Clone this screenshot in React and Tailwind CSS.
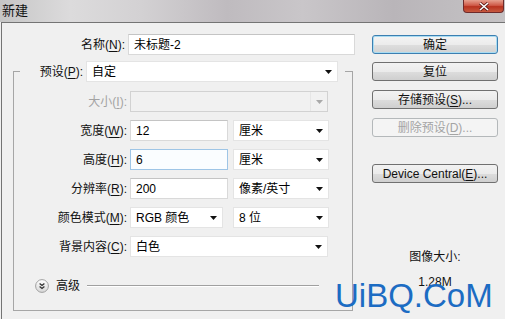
const Arrow = ({ disabled }) => (
  <svg width="7" height="4" viewBox="0 0 7 4" className="shrink-0">
    <path d="M0 0H7L3.5 4Z" fill={disabled ? '#a9a9a9' : '#111'} />
  </svg>
);

function Label({ children, width = 'w-[113px]', disabled }) {
  return (
    <div className={`${width} shrink-0 text-right ${disabled ? 'text-[#a3a3a3]' : 'text-[#111]'}`}>
      {children}
    </div>
  );
}

function Input({ value, width, focused }) {
  return (
    <div
      className={`${width} h-[21px] flex items-center pl-[5px] border ${
        focused ? 'border-[#9ec5e6] bg-[#fafdff]' : 'border-[#d9d9d9] border-t-[#c4c4c4] bg-white'
      }`}
    >
      {value}
    </div>
  );
}

function Select({ value, width }) {
  return (
    <div className={`${width} h-[21px] flex items-center justify-between pl-[5px] pr-[5px] bg-white border border-[#e4e4e4]`}>
      <span>{value}</span>
      <Arrow />
    </div>
  );
}

function Row({ label, disabled, children }) {
  return (
    <div className="flex items-center h-[21px]">
      <Label disabled={disabled}>{label}</Label>
      <div className="ml-[3px] flex items-center">{children}</div>
    </div>
  );
}

function Btn({ children, primary, disabled, className = '' }) {
  const base = 'w-[126px] h-[19px] flex items-center justify-center rounded-[3px] border';
  const look = disabled
    ? 'border-[#b4b8ba] bg-[#f4f4f4] text-[#a4a4a4]'
    : primary
    ? 'border-[#3c7fb1] shadow-[inset_0_0_0_1px_#a9dcf2] bg-[linear-gradient(to_bottom,#f4f4f4_0%,#ececec_50%,#dedede_51%,#d2d2d2_100%)] text-[#111]'
    : 'border-[#707070] bg-[linear-gradient(to_bottom,#f2f2f2_0%,#ebebeb_50%,#dddddd_51%,#cfcfcf_100%)] text-[#111]';
  return <div className={`${base} ${look} ${className}`}>{children}</div>;
}

const U = ({ children }) => <span className="underline underline-offset-2">{children}</span>;

export default function App() {
  return (
    <div className="relative w-[505px] h-[319px] overflow-hidden bg-[#f0f0f0] text-[12px] leading-[16px] font-['Liberation_Sans','Noto_Sans_CJK_SC',sans-serif]">
      {/* title bar */}
      <div className="h-[22px] flex bg-[linear-gradient(to_right,#c6c6c6_0%,#dcdbdc_14%,#d3d1d3_28%,#bfbbbf_45%,#c9c6c9_60%,#b9b5b9_78%,#c5c3c5_100%)]">
        <div className="pl-[2px] pt-[3px] text-[13px] text-[#111]">新建</div>
        <div className="ml-auto mr-[1px] w-[41px] h-[13px] rounded-b-[4px] border border-t-0 border-[#6e2a2a] bg-[linear-gradient(to_bottom,#e6a08f_0%,#cf5a48_45%,#b8321f_55%,#c75a40_100%)] flex items-center justify-center">
          <svg width="12" height="9" viewBox="0 0 12 9">
            <path d="M2 1L10 8M10 1L2 8" stroke="#5a1a14" strokeWidth="3" />
            <path d="M2 1L10 8M10 1L2 8" stroke="#fff" strokeWidth="1.6" />
          </svg>
        </div>
      </div>

      {/* body */}
      <div className="ml-[1px] h-[297px] border-l border-t border-[#747474] flex">
        {/* left column */}
        <div className="w-[359px] flex flex-col">
          <div className="mt-[11px] flex items-center h-[21px]">
            <Label width="w-[123px]">
              名称(<U>N</U>):
            </Label>
            <div className="ml-[3px]">
              <Input value="未标题-2" width="w-[227px]" />
            </div>
          </div>

          <fieldset className="mt-[6px] ml-[11px] w-[340px] border border-[#a6a6a6]">
            <legend className="ml-[6px]">
              <div className="flex items-center h-[21px] w-[325px]">
                <div className="w-[63px] text-right text-[#111]">
                  预设(<U>P</U>):
                </div>
                <div className="ml-[3px]">
                  <Select value="自定" width="w-[252px]" />
                </div>
              </div>
            </legend>

            <div className="pt-[9px] flex flex-col gap-[8px]">
              <Row label={<>大小(<U>I</U>):</>} disabled>
                <div className="w-[198px] h-[21px] flex bg-[#f1f1f1] border border-[#d2d2d2]">
                  <div className="flex-1" />
                  <div className="w-[17px] flex items-center justify-center border-l border-[#e6e6e6]">
                    <Arrow disabled />
                  </div>
                </div>
              </Row>
              <Row label={<>宽度(<U>W</U>):</>}>
                <Input value="12" width="w-[98px]" />
                <div className="ml-[5px]">
                  <Select value="厘米" width="w-[96px]" />
                </div>
              </Row>
              <Row label={<>高度(<U>H</U>):</>}>
                <Input value="6" width="w-[98px]" focused />
                <div className="ml-[5px]">
                  <Select value="厘米" width="w-[96px]" />
                </div>
              </Row>
              <Row label={<>分辨率(<U>R</U>):</>}>
                <Input value="200" width="w-[98px]" />
                <div className="ml-[5px]">
                  <Select value="像素/英寸" width="w-[96px]" />
                </div>
              </Row>
              <Row label={<>颜色模式(<U>M</U>):</>}>
                <Select value="RGB 颜色" width="w-[93px]" />
                <div className="ml-[10px]">
                  <Select value="8 位" width="w-[96px]" />
                </div>
              </Row>
              <Row label={<>背景内容(<U>C</U>):</>}>
                <Select value="白色" width="w-[198px]" />
              </Row>

              <div className="mt-[14px] mb-[17px] flex items-center h-[14px]">
                <svg width="14" height="14" viewBox="0 0 14 14" className="ml-[21px]">
                  <defs>
                    <linearGradient id="adv" x1="0" y1="0" x2="0" y2="1">
                      <stop offset="0" stopColor="#ffffff" />
                      <stop offset="1" stopColor="#d6d6d6" />
                    </linearGradient>
                  </defs>
                  <circle cx="7" cy="7" r="6.4" fill="url(#adv)" stroke="#a0a0a0" />
                  <path d="M4.6 4.4L7 6.4L9.4 4.4M4.6 7.4L7 9.4L9.4 7.4" fill="none" stroke="#333" strokeWidth="1.3" />
                </svg>
                <span className="ml-[7px] text-[#111]">高级</span>
                <div className="ml-[7px] w-[232px] h-[2px] border-t border-[#a0a0a0] border-b border-b-white" />
              </div>
            </div>
          </fieldset>
        </div>

        {/* right column */}
        <div className="ml-[11px] flex flex-col">
          <Btn primary className="mt-[12px]">确定</Btn>
          <Btn className="mt-[8px]">复位</Btn>
          <Btn className="mt-[9px]">
            存储预设(<U>S</U>)...
          </Btn>
          <Btn disabled className="mt-[9px]">
            删除预设(<U>D</U>)...
          </Btn>
          <Btn className="mt-[27px]">
            Device Central(<U>E</U>)...
          </Btn>
          <div className="mt-[66px] text-center text-[#111]">图像大小:</div>
          <div className="mt-[9px] text-center text-[#111]">1.28M</div>
        </div>
      </div>

      {/* watermark */}
      <div className="absolute left-[335px] top-[279px] text-[33px] leading-none text-[#1c6cc3] font-['Liberation_Sans',sans-serif]">
        UiBQ.CoM
      </div>
    </div>
  );
}
